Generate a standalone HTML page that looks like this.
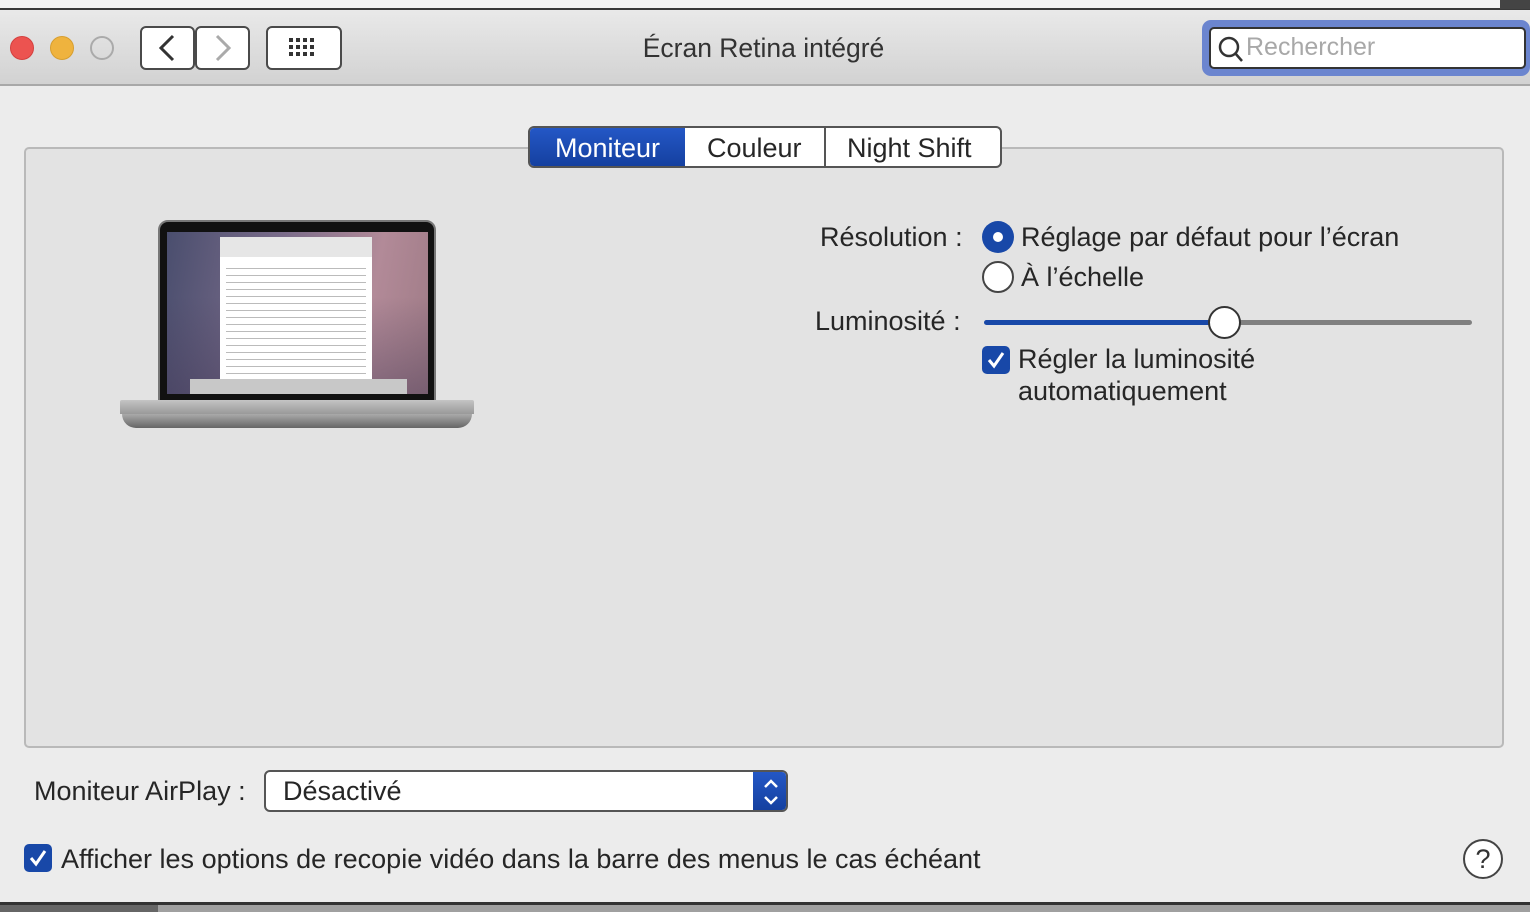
<!DOCTYPE html>
<html><head><meta charset="utf-8"><style>
*{margin:0;padding:0;box-sizing:border-box}
body{width:1530px;height:912px;overflow:hidden;background:#ececec;font-family:"Liberation Sans","DejaVu Sans",sans-serif;color:#262626;position:relative}
.a{position:absolute}
.t{font-size:27px;white-space:nowrap}
</style></head><body>
<div class="a" style="left:0;top:0;width:1530px;height:8px;background:#f4f4f4"></div>
<div class="a" style="left:0;top:8px;width:1530px;height:2px;background:#3a3a3a"></div>
<div class="a" style="left:1500px;top:0;width:30px;height:9px;background:#444"></div>
<div class="a" style="left:0;top:10px;width:1530px;height:74px;background:linear-gradient(#e9e9e9,#d2d2d2)"></div>
<div class="a" style="left:0;top:84px;width:1530px;height:2px;background:#a8a8a8"></div>
<div class="a" style="left:10px;top:36px;width:24px;height:24px;border-radius:50%;background:#ec5350;border:1px solid #d4403e"></div>
<div class="a" style="left:50px;top:36px;width:24px;height:24px;border-radius:50%;background:#efb33e;border:1px solid #d79e2f"></div>
<div class="a" style="left:90px;top:36px;width:24px;height:24px;border-radius:50%;border:2px solid #aaa"></div>
<div class="a" style="left:140px;top:26px;width:55px;height:44px;border:2px solid #4a4a4a;border-radius:6px;background:#fff"></div>
<div class="a" style="left:195px;top:26px;width:55px;height:44px;border:2px solid #4a4a4a;border-radius:6px;background:#fff"></div>
<svg class="a" style="left:140px;top:26px" width="110" height="44"><path d="M33 10 L21 22 L33 34" stroke="#333" stroke-width="3" fill="none"/><path d="M77 10 L89 22 L77 34" stroke="#aaa" stroke-width="3" fill="none"/></svg>
<div class="a" style="left:266px;top:26px;width:76px;height:44px;border:2px solid #4a4a4a;border-radius:6px;background:#fff"></div>
<svg class="a" style="left:266px;top:26px" width="76" height="44"><g fill="#333"><rect x="23" y="12" width="4" height="4"/><rect x="30" y="12" width="4" height="4"/><rect x="37" y="12" width="4" height="4"/><rect x="44" y="12" width="4" height="4"/><rect x="23" y="19" width="4" height="4"/><rect x="30" y="19" width="4" height="4"/><rect x="37" y="19" width="4" height="4"/><rect x="44" y="19" width="4" height="4"/><rect x="23" y="26" width="4" height="4"/><rect x="30" y="26" width="4" height="4"/><rect x="37" y="26" width="4" height="4"/><rect x="44" y="26" width="4" height="4"/></g></svg>
<div class="a t" style="left:0;width:1527px;top:33px;text-align:center;color:#333;font-size:26.5px">Écran Retina intégré</div>
<div class="a" style="left:1202px;top:20px;width:328px;height:56px;border-radius:9px;background:#6b85cf"></div>
<div class="a" style="left:1209px;top:27px;width:317px;height:42px;border-radius:5px;background:#fff;border:2px solid #333"></div>
<svg class="a" style="left:1217px;top:36px" width="28" height="28"><circle cx="12" cy="11" r="9" stroke="#333" stroke-width="2.5" fill="none"/><path d="M18 17 L25 25" stroke="#333" stroke-width="2.5"/></svg>
<div class="a t" style="left:1246px;top:33px;color:#a8a8a8;font-size:25px">Rechercher</div>

<div class="a" style="left:24px;top:147px;width:1480px;height:601px;border:2px solid #b9b9b9;border-radius:5px;background:#e3e3e3"></div>
<div class="a" style="left:528px;top:126px;width:474px;height:42px;border:2px solid #555;border-radius:6px;background:#fff;overflow:hidden">
<div class="a" style="left:0;top:0;width:155px;height:40px;background:linear-gradient(#2457c6,#143f9e)"></div>
<div class="a" style="left:294px;top:0;width:2px;height:40px;background:#555"></div>
<div class="a t" style="left:25px;top:5px;color:#fff">Moniteur</div>
<div class="a t" style="left:177px;top:5px">Couleur</div>
<div class="a t" style="left:317px;top:5px">Night Shift</div>
</div>

<div class="a" style="left:158px;top:220px;width:278px;height:182px;border-radius:10px 10px 0 0;background:#111;border:2px solid #777"></div>
<div class="a" style="left:167px;top:232px;width:261px;height:162px;background:linear-gradient(180deg,rgba(0,0,0,0) 40%,rgba(60,50,80,.4)),linear-gradient(100deg,#4a4e6e,#7a6c8a 40%,#b28a98 75%,#9f7b86)"></div>
<div class="a" style="left:220px;top:237px;width:152px;height:156px;background:#fff"></div>
<div class="a" style="left:220px;top:237px;width:152px;height:20px;background:#e6e6e6"></div>
<div class="a" style="left:226px;top:264px;width:140px;height:110px;background:repeating-linear-gradient(#fff 0,#fff 4px,#bbb 4px,#bbb 5px,#fff 5px,#fff 7px)"></div>
<div class="a" style="left:190px;top:379px;width:217px;height:15px;background:#c8c8c8"></div>
<div class="a" style="left:120px;top:400px;width:354px;height:14px;border-radius:2px 2px 0 0;background:linear-gradient(#c4c4c4,#999)"></div>
<div class="a" style="left:122px;top:414px;width:350px;height:14px;border-radius:0 0 40px 40px;background:linear-gradient(#aaa,#666)"></div>

<div class="a t" style="left:820px;top:222px">Résolution :</div>
<div class="a" style="left:982px;top:221px;width:32px;height:32px;border-radius:50%;background:#1848a8"></div>
<div class="a" style="left:993px;top:232px;width:10px;height:10px;border-radius:50%;background:#fff"></div>
<div class="a t" style="left:1021px;top:222px">Réglage par défaut pour l’écran</div>
<div class="a" style="left:982px;top:261px;width:32px;height:32px;border-radius:50%;background:#fff;border:2px solid #444"></div>
<div class="a t" style="left:1021px;top:262px">À l’échelle</div>
<div class="a t" style="left:815px;top:306px">Luminosité :</div>
<div class="a" style="left:984px;top:320px;width:230px;height:5px;border-radius:3px;background:#1848a8"></div>
<div class="a" style="left:1220px;top:320px;width:252px;height:5px;border-radius:3px;background:#808080"></div>
<div class="a" style="left:1208px;top:306px;width:33px;height:33px;border-radius:50%;background:#fff;border:2px solid #333"></div>
<div class="a" style="left:982px;top:346px;width:28px;height:28px;border-radius:5px;background:#1848a8"></div>
<svg class="a" style="left:982px;top:346px" width="28" height="28"><path d="M7 14 L12 20 L21 7" stroke="#fff" stroke-width="3" fill="none"/></svg>
<div class="a t" style="left:1018px;top:344px">Régler la luminosité</div>
<div class="a t" style="left:1018px;top:376px">automatiquement</div>

<div class="a t" style="left:34px;top:776px">Moniteur AirPlay :</div>
<div class="a" style="left:264px;top:770px;width:524px;height:42px;border:2px solid #555;border-radius:6px;background:#fff;overflow:hidden"><div class="a" style="right:0;top:0;width:33px;height:40px;background:linear-gradient(#2457c6,#143f9e)"></div></div>
<svg class="a" style="left:755px;top:772px" width="33" height="40"><path d="M10 15 L16 9 L22 15 M10 25 L16 31 L22 25" stroke="#fff" stroke-width="2.5" fill="none"/></svg>
<div class="a t" style="left:283px;top:776px">Désactivé</div>
<div class="a" style="left:24px;top:844px;width:28px;height:28px;border-radius:5px;background:#1848a8"></div>
<svg class="a" style="left:24px;top:844px" width="28" height="28"><path d="M7 14 L12 20 L21 7" stroke="#fff" stroke-width="3" fill="none"/></svg>
<div class="a t" style="left:61px;top:844px">Afficher les options de recopie vidéo dans la barre des menus le cas échéant</div>
<div class="a" style="left:1463px;top:839px;width:40px;height:40px;border-radius:50%;background:#fff;border:2px solid #444;text-align:center;font-size:27px;line-height:36px;color:#333">?</div>
<div class="a" style="left:0;top:902px;width:1530px;height:3px;background:#333"></div>
<div class="a" style="left:0;top:905px;width:1530px;height:7px;background:#a0a0a0"></div>
<div class="a" style="left:0;top:905px;width:158px;height:7px;background:#666"></div>
</body></html>
